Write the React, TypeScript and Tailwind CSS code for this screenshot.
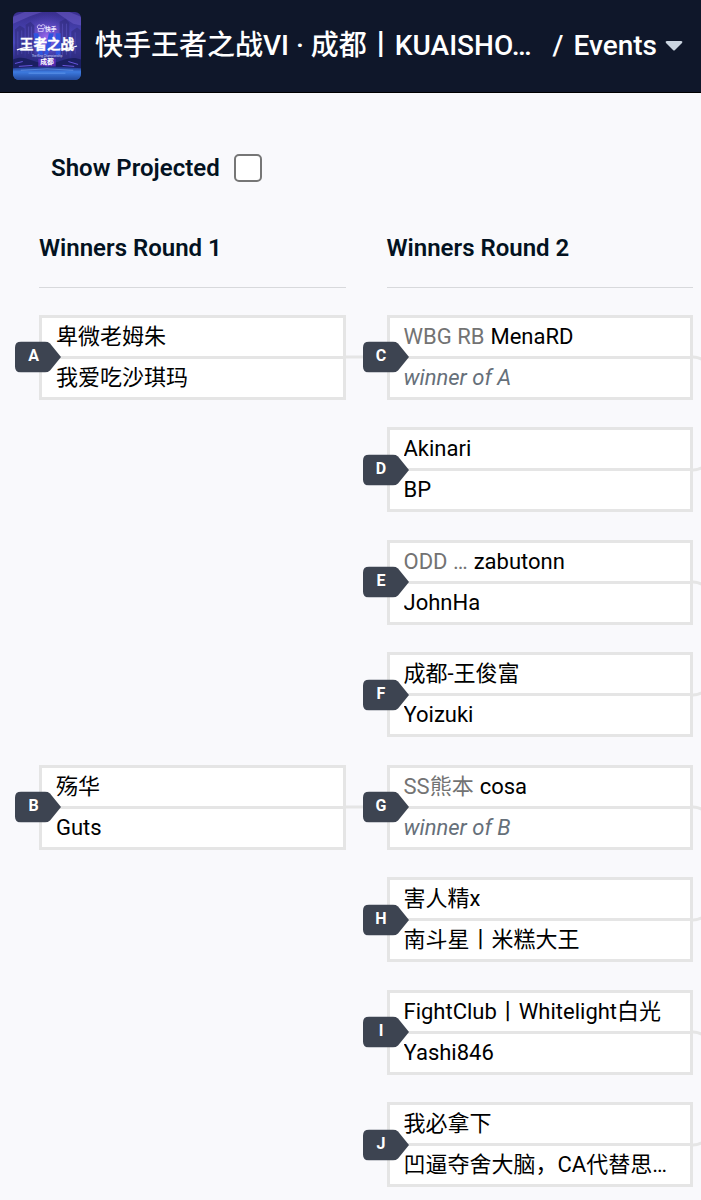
import React, { useState } from 'react'

interface Entrant {
  name: string
  prefix?: string
  pending?: boolean
}

interface Match {
  id: string
  entrants: [Entrant, Entrant]
  // Direction in which the connector leaves towards the next round
  next: 'straight' | 'down' | 'up'
}

interface Round {
  title: string
  // One entry for each slot of the bracket, null where no match is played
  slots: (Match | null)[]
}

const ROUNDS: Round[] = [
  {
    title: 'Winners Round 1',
    slots: [
      { id: 'A', entrants: [{ name: '卑微老姆朱' }, { name: '我爱吃沙琪玛' }], next: 'straight' },
      null,
      null,
      null,
      { id: 'B', entrants: [{ name: '殇华' }, { name: 'Guts' }], next: 'straight' },
      null,
      null,
      null,
    ],
  },
  {
    title: 'Winners Round 2',
    slots: [
      { id: 'C', entrants: [{ prefix: 'WBG RB', name: 'MenaRD' }, { name: 'winner of A', pending: true }], next: 'down' },
      { id: 'D', entrants: [{ name: 'Akinari' }, { name: 'BP' }], next: 'up' },
      { id: 'E', entrants: [{ prefix: 'ODD …', name: 'zabutonn' }, { name: 'JohnHa' }], next: 'down' },
      { id: 'F', entrants: [{ name: '成都-王俊富' }, { name: 'Yoizuki' }], next: 'up' },
      { id: 'G', entrants: [{ prefix: 'SS熊本', name: 'cosa' }, { name: 'winner of B', pending: true }], next: 'down' },
      { id: 'H', entrants: [{ name: '害人精x' }, { name: '南斗星丨米糕大王' }], next: 'up' },
      { id: 'I', entrants: [{ name: 'FightClub丨Whitelight白光' }, { name: 'Yashi846' }], next: 'down' },
      { id: 'J', entrants: [{ name: '我必拿下' }, { name: '凹逼夺舍大脑，CA代替思…' }], next: 'up' },
    ],
  },
]

const CONNECTORS = {
  straight: 'M0 20H41',
  down: 'M0 20C6 20 12 22 18 32',
  up: 'M0 20C6 20 12 18 18 8',
}

function EventLogo() {
  return (
    <svg viewBox="0 0 70 70" className="size-[68px] shrink-0 rounded-md" role="img" aria-label="王者之战 成都">
      <defs>
        <linearGradient id="sky" x1="0" y1="0" x2="0" y2="1">
          <stop offset="0" stopColor="#3a2f8f" />
          <stop offset="0.45" stopColor="#4b4bc0" />
          <stop offset="0.72" stopColor="#2b2b82" />
          <stop offset="1" stopColor="#2b5cc0" />
        </linearGradient>
        <linearGradient id="floor" x1="0" y1="0" x2="0" y2="1">
          <stop offset="0" stopColor="#1f2a7c" />
          <stop offset="0.4" stopColor="#3d7be0" />
          <stop offset="1" stopColor="#234a9e" />
        </linearGradient>
        <radialGradient id="glow">
          <stop offset="0" stopColor="#a86bf0" stopOpacity="0.9" />
          <stop offset="1" stopColor="#5a4bd0" stopOpacity="0" />
        </radialGradient>
      </defs>
      <rect width="70" height="70" fill="url(#sky)" />
      <path d="M0 12L18 4 30 0H12L0 5zM44 0L62 12 70 14V5L58 0z" fill="#7a68d8" opacity="0.4" />
      <ellipse cx="35" cy="26" rx="28" ry="24" fill="url(#glow)" />
      <path d="M2 48V18l5-4 5 3v31zM13 48V13l5-3 4 4v34zM48 48V10l6-3 4 4v37zM60 48V20l6-4 4 3v29z" fill="#312c80" opacity="0.65" />
      <path d="M5 20v24M9 19v24M16 15v28M19 15v28M51 12v32M55 12v32M64 21v22" stroke="#6c66d6" opacity="0.4" />
      <path d="M21 22h5l5 22h-5zM37 22h5l-6 22h-4zM44 22h5v22h-5z" fill="#2f55e0" />
      <path d="M0 49C10 44 18 50 27 52L35 57 44 52C53 49 61 45 70 49V59H0z" fill="#1b1f62" />
      <path d="M0 58Q35 54 70 58V70H0z" fill="url(#floor)" />
      <path d="M8 60Q35 57 62 60M16 63H54" fill="none" stroke="#7db4ff" opacity="0.5" />
      <path d="M2 53l8-2M6 56l14-1M51 55l12 1M57 51l10 3" stroke="#7d65ff" opacity="0.8" />
      <path d="M26 17a2 2 0 1 1 3-2 2 2 0 1 1 2 2M26 17h5v3h-5z" fill="none" stroke="#e8ddff" strokeWidth="0.8" />
      <text x="33" y="20" fill="#eee8ff" className="text-[6px] font-bold">快手</text>
      <text x="35" y="38" textAnchor="middle" fill="#fff" stroke="#fff" strokeWidth="0.4" className="text-[14px] font-bold">王者之战</text>
      <path d="M4 39l7-2 9-1M50 38l9-1 7-2" fill="none" stroke="#fff" strokeWidth="1.2" />
      <text x="35" y="46" textAnchor="middle" fill="#c9d4ff" className="text-[3px]">The King Championship</text>
      <path d="M26 48h18v8H26z" fill="#7a32e0" opacity="0.6" />
      <text x="35" y="54" textAnchor="middle" fill="#fff" className="text-[7px] font-bold">成都</text>
    </svg>
  )
}

function EntrantRow({ entrant }: { entrant: Entrant }) {
  return (
    <div className="box-content flex h-[38px] items-center gap-1.5 overflow-hidden pl-3.5 pr-3 text-[22px] leading-7 whitespace-nowrap">
      {entrant.prefix && <span className="text-[#737373]">{entrant.prefix}</span>}
      <span className={entrant.pending ? 'truncate italic text-[#66707a]' : 'truncate text-black'}>
        {entrant.name}
      </span>
    </div>
  )
}

function MatchTag({ id }: { id: string }) {
  return (
    <div className="absolute -left-6 top-1/2 h-[31px] w-[47px] -translate-y-1/2">
      <svg viewBox="0 0 47 31" className="absolute inset-0 size-full" aria-hidden="true">
        <path d="M6 0H30Q33 0 35 2L46 15.500 35 29Q33 31 30 31H6Q0 31 0 25V6Q0 0 6 0Z" fill="#3d4451" />
      </svg>
      <span className="relative block w-[37px] text-center text-base leading-7 font-bold text-white">{id}</span>
    </div>
  )
}

function MatchCard({ match }: { match: Match }) {
  return (
    <div className="relative">
      <svg className="absolute left-full top-1/2 h-10 w-[41px] -translate-y-1/2" viewBox="0 0 41 40" fill="none" aria-hidden="true">
        <path d={CONNECTORS[match.next]} stroke="#e5e5e5" strokeWidth="3" />
      </svg>
      <div className="divide-y-3 divide-[#e5e5e5] border-3 border-[#e5e5e5] bg-white">
        {match.entrants.map((entrant) => (
          <EntrantRow key={entrant.name} entrant={entrant} />
        ))}
      </div>
      <MatchTag id={match.id} />
    </div>
  )
}

function RoundColumn({ round }: { round: Round }) {
  return (
    <section className="min-w-0">
      <h2 className="border-b border-[#d8d9dc] pb-6 text-2xl leading-[30px] font-semibold">{round.title}</h2>
      <div className="mt-[13px] grid h-[900px] grid-rows-8">
        {round.slots.map((match, i) => (
          <div key={i} className="flex flex-col justify-center">
            {match && <MatchCard match={match} />}
          </div>
        ))}
      </div>
    </section>
  )
}

export default function App() {
  const [showProjected, setShowProjected] = useState(false)

  return (
    <div className="h-screen overflow-hidden bg-[#f9f9fc] font-[Roboto,'Noto_Sans_CJK_SC',sans-serif] text-[#031221]">
      {/* Tournament bar */}
      <header className="flex items-center border-b border-black bg-[#0f172a] py-3 pl-[13px] pr-[18px] text-white">
        <EventLogo />
        <a href="#tournament" className="ml-3.5 min-w-0 flex-1 truncate text-[28px] leading-10 font-medium">
          快手王者之战VI · 成都丨KUAISHO…
        </a>
        <span className="ml-4 text-[28px] leading-10 font-medium">/</span>
        <button type="button" className="ml-2.5 flex items-center gap-2 text-[28px] leading-10 font-medium">
          Events
          <svg viewBox="0 0 18 10" className="h-2.5 w-[18px]" fill="#cbd5e1" aria-hidden="true">
            <path d="M2 0h14q2 0 1 2l-7 7q-1 1-2 0L1 2Q0 0 2 0z" />
          </svg>
        </button>
      </header>

      <label className="ml-[51px] mt-[59px] flex w-fit items-center gap-3.5 text-2xl leading-8 font-semibold">
        Show Projected
        <input
          type="checkbox"
          checked={showProjected}
          onChange={(e) => setShowProjected(e.target.checked)}
          className="size-7 appearance-none rounded-[5px] border-2 border-[#767676] bg-white checked:bg-[#3d4451]"
        />
      </label>

      {/* Bracket */}
      <main className="mt-[49px] grid grid-cols-2 gap-[41px] pl-[39px] pr-2">
        {ROUNDS.map((round) => (
          <RoundColumn key={round.title} round={round} />
        ))}
      </main>
    </div>
  )
}
